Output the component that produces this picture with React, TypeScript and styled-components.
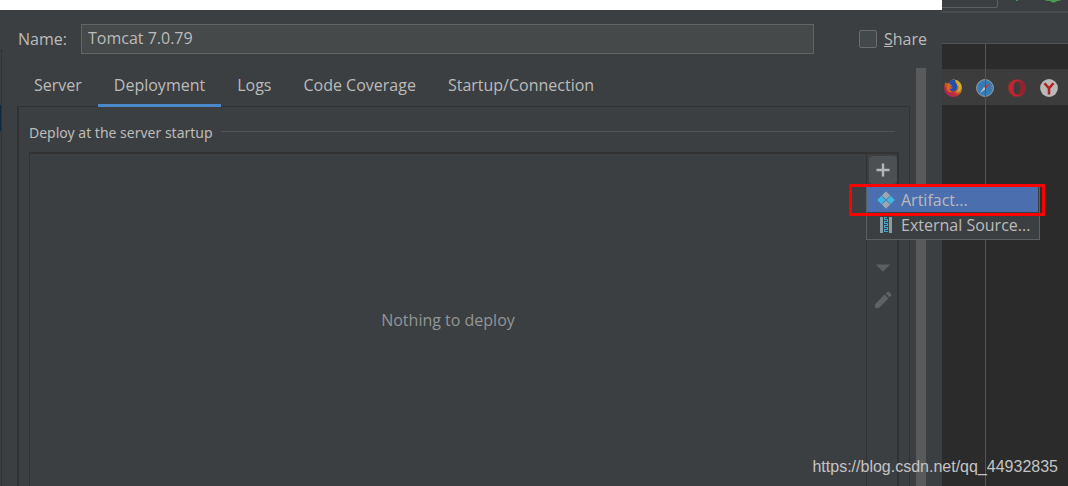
import React from 'react';
import styled, { createGlobalStyle } from 'styled-components';

const GlobalStyle = createGlobalStyle`
  *, *::before, *::after { box-sizing: border-box; }
  body {
    margin: 0;
    background: #2b2b2b;
    color: #bbbbbb;
    font-family: "Open Sans", "Noto Sans", sans-serif;
    font-size: 16px;
    line-height: 20px;
  }
  button, input { font: inherit; color: inherit; }
`;

const Screen = styled.div`
  position: relative;
  display: grid;
  grid-template-columns: minmax(0, 1fr) 126px;
  min-height: 100vh;
`;

const DialogColumn = styled.div`
  display: flex;
  flex-direction: column;
  border-top: 10px solid #ffffff;
  background: #3c3f41;
`;

const DialogFrame = styled.div`
  display: flex;
  flex: 1;
`;

const TreeEdge = styled.div`
  width: 2px;
  margin-top: 40px;
  padding-top: 54px;
  border-top: 1px solid #323232;
  border-right: 1px solid #323232;
`;

const TreeSelection = styled.div`
  height: 26px;
  background: #0d293e;
`;

const Form = styled.form`
  display: flex;
  flex: 1;
  flex-direction: column;
  min-width: 0;
`;

const NameRow = styled.div`
  display: flex;
  align-items: center;
  height: 58px;
  padding: 0 15px 0 16px;
`;

const NameLabel = styled.label`
  width: 63px;
`;

const NameInput = styled.input`
  flex: 1;
  min-width: 0;
  height: 30px;
  padding: 0 6px 2px;
  border: 1px solid #646464;
  border-radius: 0;
  background: #45494a;
  outline: none;
`;

const ShareLabel = styled.label`
  display: flex;
  align-items: center;
  gap: 7px;
  margin-left: 45px;
`;

const ShareBox = styled.input`
  appearance: none;
  width: 18px;
  height: 18px;
  margin: 0;
  border: 1px solid #6b6b6b;
  border-radius: 2px;
  background: #43494a;
`;

const Content = styled.div`
  display: flex;
  flex: 1;
  gap: 6px;
  padding: 0 16px 0 15px;
`;

const TabPanel = styled.div`
  display: flex;
  flex: 1;
  flex-direction: column;
  min-width: 0;
`;

const Tabs = styled.div`
  display: flex;
  height: 39px;
  margin-bottom: -1px;
  padding-left: 1px;
`;

const Tab = styled.button<{ $active?: boolean }>`
  position: relative;
  padding: 0 16px 2px;
  border: 0;
  border-bottom: 3px solid ${p => (p.$active ? '#4a88c7' : 'transparent')};
  background: none;
  white-space: nowrap;
`;

const Pane = styled.section`
  display: flex;
  flex: 1;
  flex-direction: column;
  padding: 16px 10px 0;
  border: solid #323232;
  border-width: 1px 1px 0 2px;
`;

const GroupTitle = styled.h2`
  display: flex;
  align-items: center;
  gap: 8px;
  margin: 0 4px 9px 0;
  font-family: "Noto Sans", "Open Sans", sans-serif;
  font-size: 14px;
  font-weight: 400;

  &::after {
    content: '';
    flex: 1;
    height: 1px;
    margin-bottom: 4px;
    background: #515456;
  }
`;

const DeployList = styled.div`
  display: flex;
  flex: 1;
  border: solid #323232;
  border-width: 2px 2px 0 1px;
`;

const EmptyText = styled.div`
  display: flex;
  flex: 1;
  align-items: center;
  justify-content: center;
  color: #939597;
`;

const Toolbar = styled.div`
  position: relative;
  display: flex;
  flex-direction: column;
  align-items: flex-end;
  gap: 4px;
  width: 31px;
  padding-top: 2px;
  border-left: 1px solid #323232;
`;

const ToolButton = styled.button<{ $pressed?: boolean }>`
  display: grid;
  place-items: center;
  width: 28px;
  height: 28px;
  padding: 0;
  border: 0;
  border-radius: 4px;
  background: ${p => (p.$pressed ? '#4c5052' : 'none')};
`;

const ToolSpacer = styled.div`
  height: 62px;
`;

const Popup = styled.div`
  position: absolute;
  z-index: 1;
  top: 32px;
  left: -1px;
  width: 174px;
  padding-bottom: 2px;
  border: 1px solid #5e6162;
  background: #3c3f41;
`;

const PopupItem = styled.button<{ $selected?: boolean }>`
  display: flex;
  align-items: center;
  gap: 6px;
  width: 171px;
  height: 25px;
  padding: 0 0 0 10px;
  border: 0;
  background: ${p => (p.$selected ? '#4b6eaf' : 'none')};
  white-space: nowrap;
`;

const Highlight = styled.div`
  position: absolute;
  z-index: 2;
  top: 30px;
  left: -18px;
  width: 196px;
  height: 32px;
  border: 3px solid #fe0000;
  pointer-events: none;
`;

const ScrollThumb = styled.div`
  width: 10px;
  background: #595a5c;
`;

const EditorColumn = styled.aside`
  display: flex;
  flex-direction: column;
  background: #2b2b2b;
`;

const RunBar = styled.div`
  display: flex;
  height: 13px;
  border-bottom: 2px solid #4b4b4b;
  background: #3c3f41;
`;

const ConfigBox = styled.div`
  width: 56px;
  height: 8px;
  border: solid #5e6060;
  border-width: 0 1px 1px 0;
  border-radius: 0 0 3px 0;
`;

const TabStrip = styled.div`
  height: 31px;
  border-bottom: 1px solid #505254;
  background: #3c3f41;
`;

const EditorArea = styled.div`
  position: relative;
  flex: 1;
  padding-top: 25px;

  &::after {
    content: '';
    position: absolute;
    top: 0;
    bottom: 0;
    left: 43px;
    width: 1px;
    background: #555555;
  }
`;

const BrowserBar = styled.div`
  display: flex;
  align-items: center;
  gap: 14px;
  height: 36px;
  padding: 2px 0 0 2px;
  background: #3c3c3c;
`;

const BrowserButton = styled.button`
  display: flex;
  padding: 0;
  border: 0;
  background: none;
`;

const Watermark = styled.div`
  position: absolute;
  z-index: 3;
  right: 10px;
  bottom: 9px;
  color: #c4c4c4;
  font-family: "Liberation Sans", Arial, sans-serif;
`;

const PlusIcon = () => (
  <svg width="14" height="14" viewBox="0 0 14 14" aria-hidden="true">
    <path d="M7 .5v13M.5 7h13" stroke="#b4b6b8" strokeWidth="2.4" />
  </svg>
);

const DownIcon = () => (
  <svg width="16" height="8" viewBox="0 0 16 8" aria-hidden="true">
    <path d="M.8.4h14.4L8 7.8z" fill="#5c5e60" />
  </svg>
);

const PencilIcon = () => (
  <svg width="18" height="18" viewBox="0 0 18 18" aria-hidden="true">
    <path d="M1 13.2 10.6 3.6l3.8 3.8L4.8 17H1zM11.7 2.5l1.600-1.600q.9-.8 1.800 0l2 2q.8.9 0 1.800l-1.600 1.600z" fill="#5f6163" />
  </svg>
);

const ArtifactIcon = () => (
  <svg width="18" height="18" viewBox="0 0 18 18" aria-hidden="true">
    <path d="M9 .2 13.2 4.4 9 8.6 4.8 4.4zM9 9.4l4.200 4.200L9 17.8l-4.200-4.200z" fill="#9aa7b0" />
    <path d="m4.400 4.800 4.200 4.200-4.200 4.200L.2 9zM13.600 4.800 17.800 9l-4.200 4.200L9.400 9z" fill="#40b6e0" />
  </svg>
);

const ArchiveIcon = () => (
  <svg width="18" height="18" viewBox="0 0 18 18" aria-hidden="true">
    <path d="M3 1h3v16H3zM12 1h3v16h-3z" fill="#8d9aa2" />
    <path d="M7 1h4v16H7z" fill="#29424e" />
    <path
      d="M7 1h3v1H7zM8 3h3v1H8zM7 5h3v1H7zM8 7h3v1H8zM7 9h3v1H7zM8 11h3v1H8zM7 13h3v1H7zM8 15h3v1H8zM7 2h1v2H7zM10 4h1v2h-1zM7 6h1v2H7zM10 8h1v2h-1zM7 10h1v2H7zM10 12h1v2h-1zM7 14h1v2H7z"
      fill="#40a9cd"
    />
  </svg>
);

const RunIcons = () => (
  <svg width="70" height="4" viewBox="0 0 70 4" aria-hidden="true">
    <path d="M18 0h2.500l-1.500 1h-1z" fill="#499c54" />
    <path d="M47 0h16l-1 .8-3 .2q-3 3-7 0l-4-.2z" fill="#499c54" />
  </svg>
);

const FirefoxIcon = () => (
  <svg width="18" height="18" viewBox="0 0 18 18" aria-hidden="true">
    <defs>
      <linearGradient id="fox" x1=".85" y1=".05" x2=".2" y2=".9">
        <stop offset="0" stopColor="#c9b52c" />
        <stop offset=".45" stopColor="#cb761f" />
        <stop offset=".75" stopColor="#c12c37" />
        <stop offset="1" stopColor="#ad2461" />
      </linearGradient>
    </defs>
    <path d="M1.6 3 3.2 4.8 5 3.7Q7 .3 10.5.3l1.2 1L13 .9q5 3 5 8.3A8.8 8.8 0 0 1 9 18 8.8 8.8 0 0 1 .2 9Q.1 5.5 1.6 3z" fill="url(#fox)" />
    <path d="M5.5 2.7Q8-.2 11 .8q.1 2.8 1.6 4.2 1.8 3-.2 5.8-2.2 2.5-5.2 1.2-2-1-1.8-2.7 1.8 1 3.4-.5L6.2 8l1.500-1.700-2.500-1.100z" fill="#224eb0" />
    <path d="m3.4 4.6 3.3 1.2 1.5.6-1.7 1.2v1.1l2.2.1q-1.5 1.5-3.4.6.7 3 3.5 3.3-4 1.6-6-2.2-1-3 .6-5.9z" fill="#cd6b22" />
    <path d="M12.2.7q1.6 2.8 1.5 6l1-1.3q1.500 5.800-3.200 8.100 4.900-.1 5.600-4.600Q17.500 4 12.200.7z" fill="#d2ae2d" />
  </svg>
);

const SafariIcon = () => (
  <svg width="18" height="18" viewBox="0 0 18 18" aria-hidden="true">
    <circle cx="9" cy="9" r="8.4" fill="#347ab5" stroke="#999fa5" />
    <circle cx="9" cy="9" r="6.6" fill="none" stroke="#5c92bd" strokeDasharray="1 2" />
    <path d="M14.3 3.7 8 8l2 2z" fill="#c23c38" />
    <path d="M3.7 14.3 8 8l2 2z" fill="#b8c1c8" />
  </svg>
);

const OperaIcon = () => (
  <svg width="18" height="18" viewBox="0 0 18 18" aria-hidden="true">
    <path
      fillRule="evenodd"
      d="M9 .2a8.800 8.800 0 1 1 0 17.600A8.800 8.800 0 0 1 9 .2zm0 2.200C6.800 2.400 5.600 5.400 5.600 9s1.200 6.600 3.400 6.600 3.600-3 3.600-6.600S11.200 2.400 9 2.400z"
      fill="#bd2530"
    />
    <path d="M9 2.400q1.500-1 3.500-.4 5.300 2 5.300 7t-5.300 7q-2 .6-3.500-.4 3.600-.6 3.600-6.600T9 2.400z" fill="#8d242d" />
  </svg>
);

const YandexIcon = () => (
  <svg width="18" height="18" viewBox="0 0 18 18" aria-hidden="true">
    <circle cx="9" cy="9" r="8.9" fill="#b9b9b9" />
    <path d="M4.500 4.200 9 9.400l4.500-5.200M9 9v6.500" fill="none" stroke="#b51f1f" strokeWidth="2.5" />
  </svg>
);

const tabs = ['Server', 'Deployment', 'Logs', 'Code Coverage', 'Startup/Connection'];

const browsers = [
  { name: 'Firefox', Icon: FirefoxIcon },
  { name: 'Safari', Icon: SafariIcon },
  { name: 'Opera', Icon: OperaIcon },
  { name: 'Yandex', Icon: YandexIcon },
];

export default function App() {
  return (
    <>
      <GlobalStyle />
      <Screen>
        <DialogColumn>
          <DialogFrame>
            <TreeEdge>
              <TreeSelection />
            </TreeEdge>
            <Form onSubmit={e => e.preventDefault()}>
              <NameRow>
                <NameLabel htmlFor="config-name">Name:</NameLabel>
                <NameInput id="config-name" type="text" defaultValue="Tomcat 7.0.79" />
                <ShareLabel>
                  <ShareBox type="checkbox" />
                  <span><u>S</u>hare</span>
                </ShareLabel>
              </NameRow>
              <Content>
                <TabPanel>
                  <Tabs role="tablist">
                    {tabs.map(name => (
                      <Tab key={name} type="button" role="tab" aria-selected={name === 'Deployment'} $active={name === 'Deployment'}>
                        {name}
                      </Tab>
                    ))}
                  </Tabs>
                  <Pane>
                    <GroupTitle>Deploy at the server startup</GroupTitle>
                    <DeployList>
                      <EmptyText>Nothing to deploy</EmptyText>
                      <Toolbar>
                        <ToolButton type="button" aria-label="Add" $pressed><PlusIcon /></ToolButton>
                        <ToolSpacer />
                        <ToolButton type="button" aria-label="Move down"><DownIcon /></ToolButton>
                        <ToolButton type="button" aria-label="Edit"><PencilIcon /></ToolButton>
                        <Popup role="menu">
                          <PopupItem type="button" role="menuitem" $selected><ArtifactIcon />Artifact...</PopupItem>
                          <PopupItem type="button" role="menuitem"><ArchiveIcon />External Source...</PopupItem>
                        </Popup>
                        <Highlight />
                      </Toolbar>
                    </DeployList>
                  </Pane>
                </TabPanel>
                <ScrollThumb />
              </Content>
            </Form>
          </DialogFrame>
        </DialogColumn>
        <EditorColumn>
          <RunBar>
            <ConfigBox />
            <RunIcons />
          </RunBar>
          <TabStrip />
          <EditorArea>
            <BrowserBar>
              {browsers.map(({ name, Icon }) => (
                <BrowserButton key={name} type="button" aria-label={name}><Icon /></BrowserButton>
              ))}
            </BrowserBar>
          </EditorArea>
        </EditorColumn>
        <Watermark>https://blog.csdn.net/qq_44932835</Watermark>
      </Screen>
    </>
  );
}
